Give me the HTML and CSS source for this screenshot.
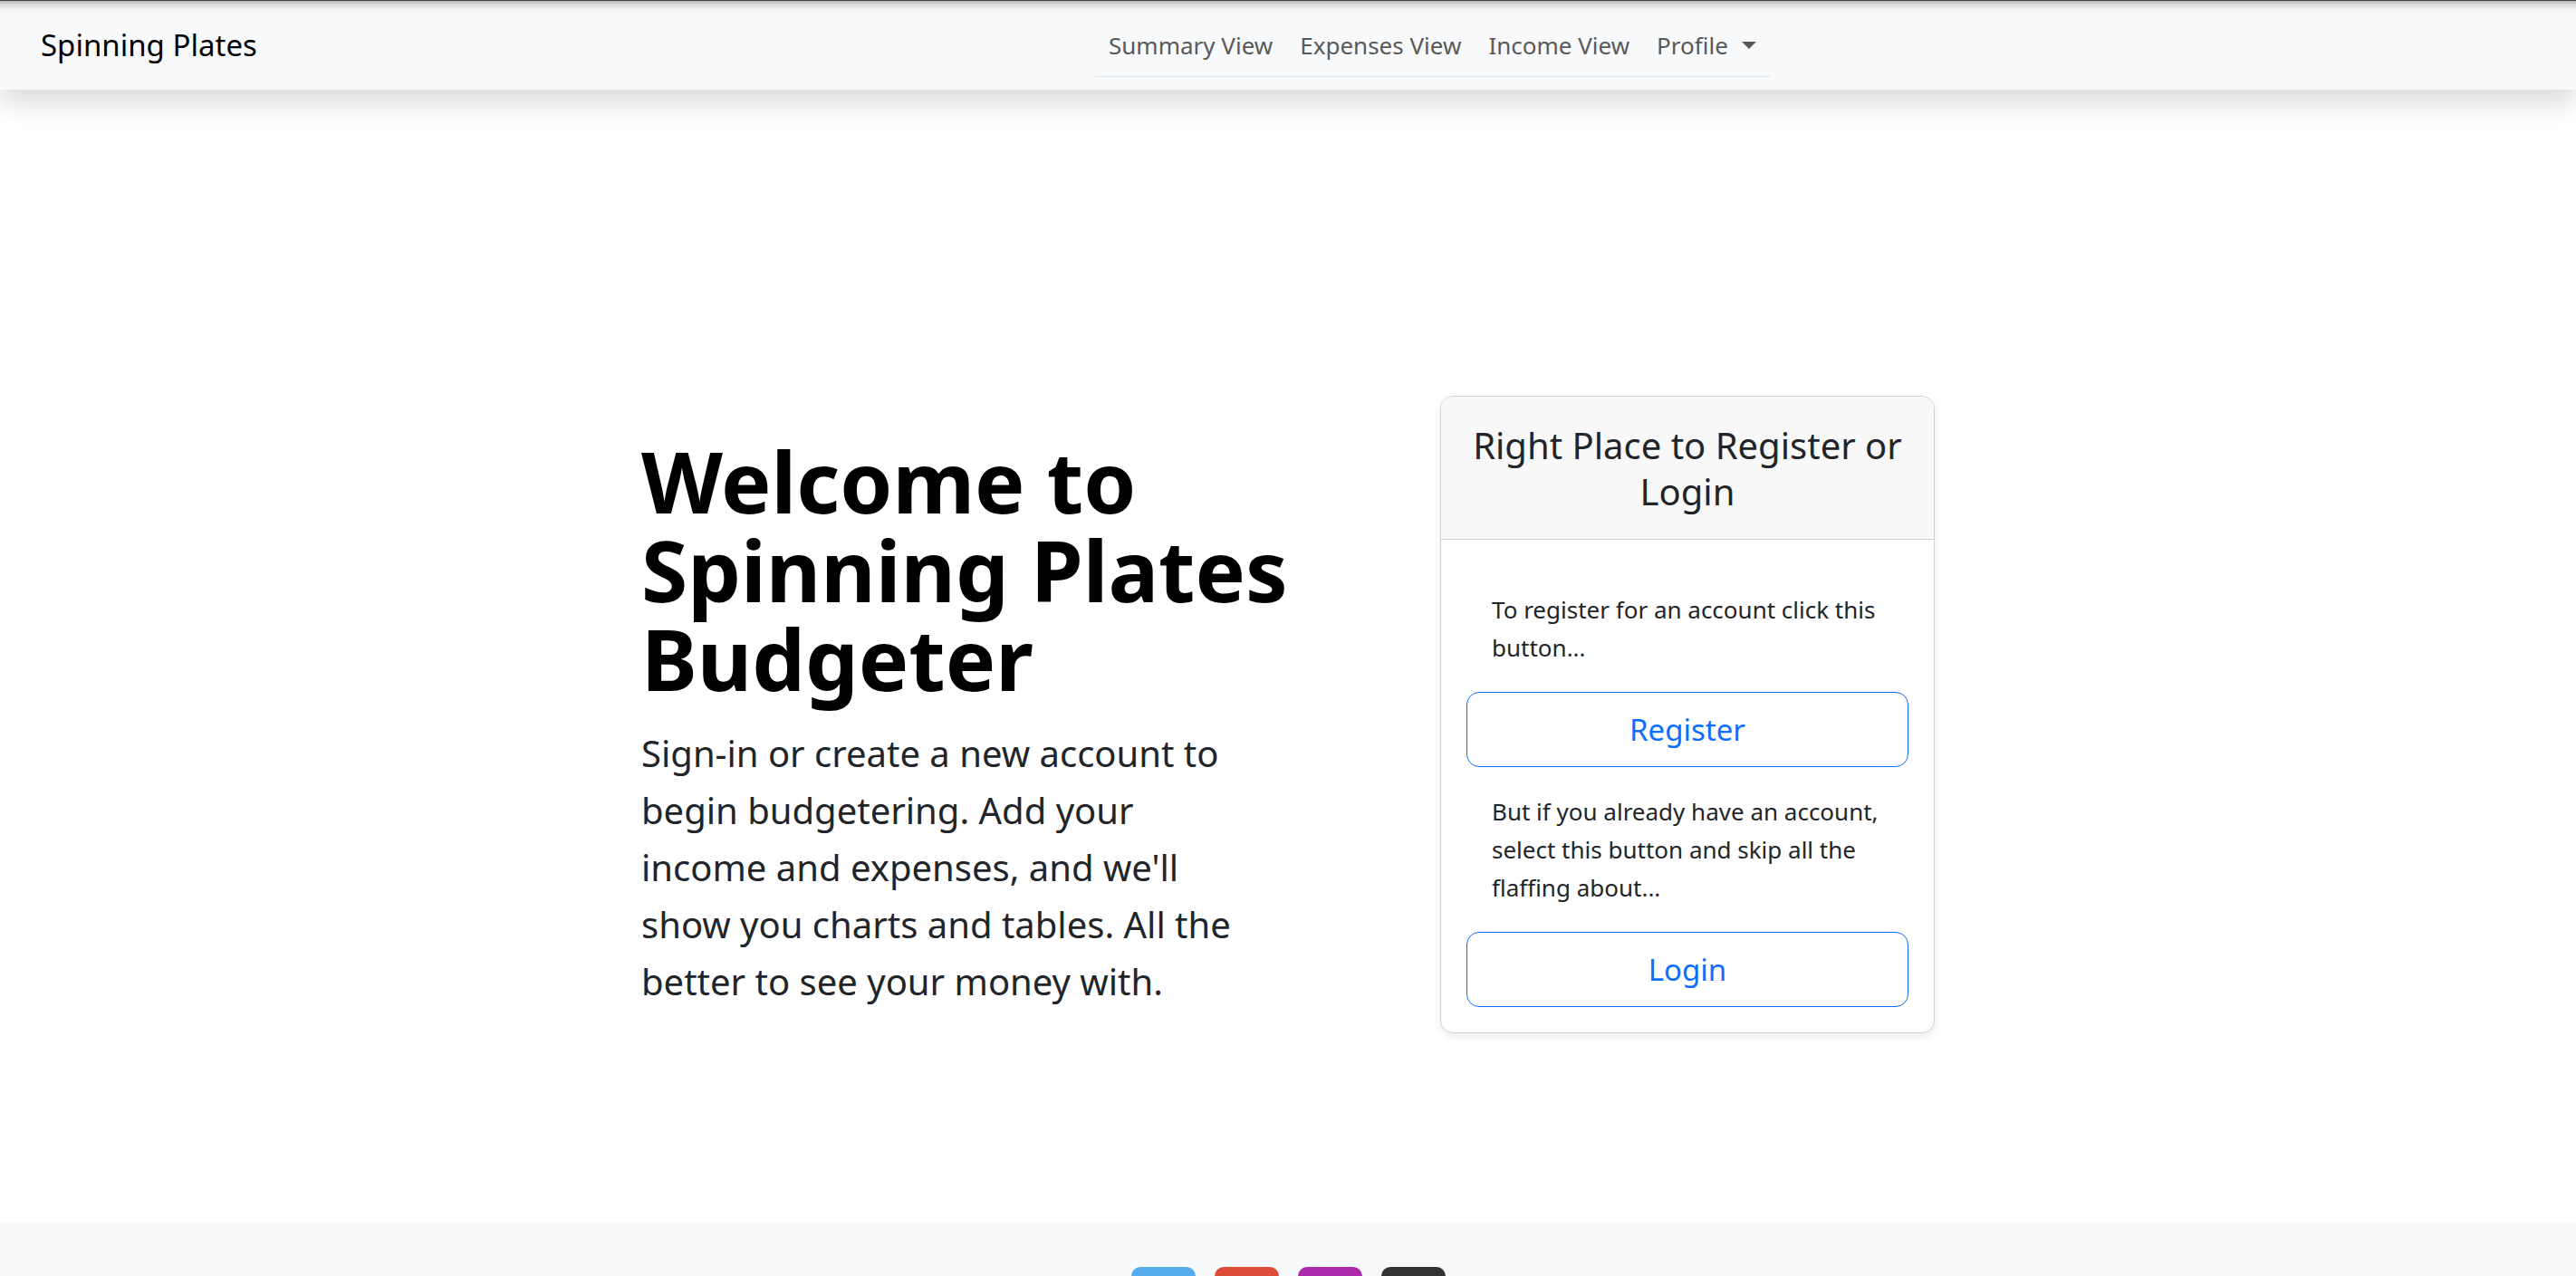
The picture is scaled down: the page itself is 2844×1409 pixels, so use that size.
FILE: index.html
```html
<!DOCTYPE html>
<html lang="en">
<head>
  <meta charset="utf-8">
  <meta name="viewport" content="width=device-width, initial-scale=1">
  <title>Spinning Plates</title>
  <link rel="stylesheet" href="styles.css">
</head>
<body>
  <header class="navbar">
    <a class="brand" href="#">Spinning Plates</a>
    <nav class="nav">
      <ul class="nav-tabs">
        <li><a class="nav-link" href="#">Summary View</a></li>
        <li><a class="nav-link" href="#">Expenses View</a></li>
        <li><a class="nav-link" href="#">Income View</a></li>
        <li><button class="nav-link dropdown-toggle" type="button" aria-haspopup="true">Profile</button></li>
      </ul>
    </nav>
  </header>

  <main class="hero">
    <section class="intro">
      <h1 class="intro-title">Welcome to Spinning Plates Budgeter</h1>
      <p class="intro-lead">Sign-in or create a new account to begin budgetering. Add your income and expenses, and we'll show you charts and tables. All the better to see your money with.</p>
    </section>

    <section class="card">
      <h2 class="card-header">Right Place to Register or Login</h2>
      <div class="card-body">
        <p class="card-text">To register for an account click this button...</p>
        <button class="btn" type="button">Register</button>
        <p class="card-text">But if you already have an account, select this button and skip all the flaffing about...</p>
        <button class="btn" type="button">Login</button>
      </div>
    </section>
  </main>

  <footer class="footer">
    <a class="social social-blue" href="#"></a>
    <a class="social social-red" href="#"></a>
    <a class="social social-purple" href="#"></a>
    <a class="social social-dark" href="#"></a>
  </footer>
</body>
</html>
```
FILE: styles.css
```css
* {
  box-sizing: border-box;
}

body {
  margin: 0;
  background: #fff;
  color: #212529;
  font-family: "Noto Sans", "Open Sans", sans-serif;
  font-size: 26px;
  line-height: 42px;
}

/* Navigation */
.navbar {
  display: flex;
  align-items: center;
  padding: 13px 21px 14px 45px;
  border-top: 1px solid #444;
  background: linear-gradient(#b8b8ba, #d8d9da 4px, #f0f1f2 9px, #f8f9fb 16px);
  box-shadow: 0 14px 28px rgba(0, 0, 0, 0.15);
}

.brand {
  margin-right: 56px;
  color: #000;
  font-size: 33px;
  text-decoration: none;
}

.nav {
  display: flex;
  flex: 1;
  justify-content: center;
}

.nav-tabs {
  display: flex;
  margin: 0;
  padding: 0;
  border-bottom: 1px solid #dee2e6;
  list-style: none;
}

.nav-link {
  display: flex;
  align-items: center;
  padding: 15px 15px 13px;
  border: 0;
  background: none;
  color: #595959;
  font: inherit;
  text-decoration: none;
}

.dropdown-toggle::after {
  content: "";
  margin-left: 15px;
  border-top: 8px solid;
  border-right: 8px solid transparent;
  border-left: 8px solid transparent;
}

/* Welcome area */
.hero {
  display: flex;
  align-items: center;
  justify-content: space-between;
  gap: 56px;
  max-width: 1428px;
  margin: 0 auto;
  padding: 338px 0 209px;
}

.intro {
  max-width: 728px;
  padding-top: 18px;
}

.intro-title {
  margin: 0 0 24px;
  color: #000;
  font-size: 93px;
  font-weight: 700;
  line-height: 98px;
}

.intro-lead {
  max-width: 660px;
  margin: 0;
  font-size: 40px;
  line-height: 63px;
}

/* Sign-in card */
.card {
  flex: 0 0 546px;
  overflow: hidden;
  border: 1px solid #d0d0d0;
  border-radius: 14px;
  box-shadow: 0 4px 8px rgba(0, 0, 0, 0.08);
}

.card-header {
  margin: 0;
  padding: 28px 28px 27px;
  border-bottom: 1px solid #d0d0d0;
  background: #f8f8f8;
  font-size: 40px;
  font-weight: 400;
  line-height: 51px;
  text-align: center;
}

.card-body {
  padding: 28px;
}

.card-text {
  margin: 0;
  padding: 28px;
}

.btn {
  display: block;
  width: 100%;
  padding: 14px 28px;
  border: 1px solid #0d6efd;
  border-radius: 14px;
  background: #fff;
  color: #0d6efd;
  font: inherit;
  font-size: 33px;
  line-height: 53px;
}

/* Footer */
.footer {
  display: flex;
  justify-content: center;
  gap: 21px;
  padding: 49px 28px;
  background: #f8f9fb;
}

.social {
  width: 71px;
  height: 66px;
  border-radius: 10px;
}

.social-blue {
  background: #55acee;
}

.social-red {
  background: #dd4b39;
}

.social-purple {
  background: #ac2bac;
}

.social-dark {
  background: #333;
}
```
